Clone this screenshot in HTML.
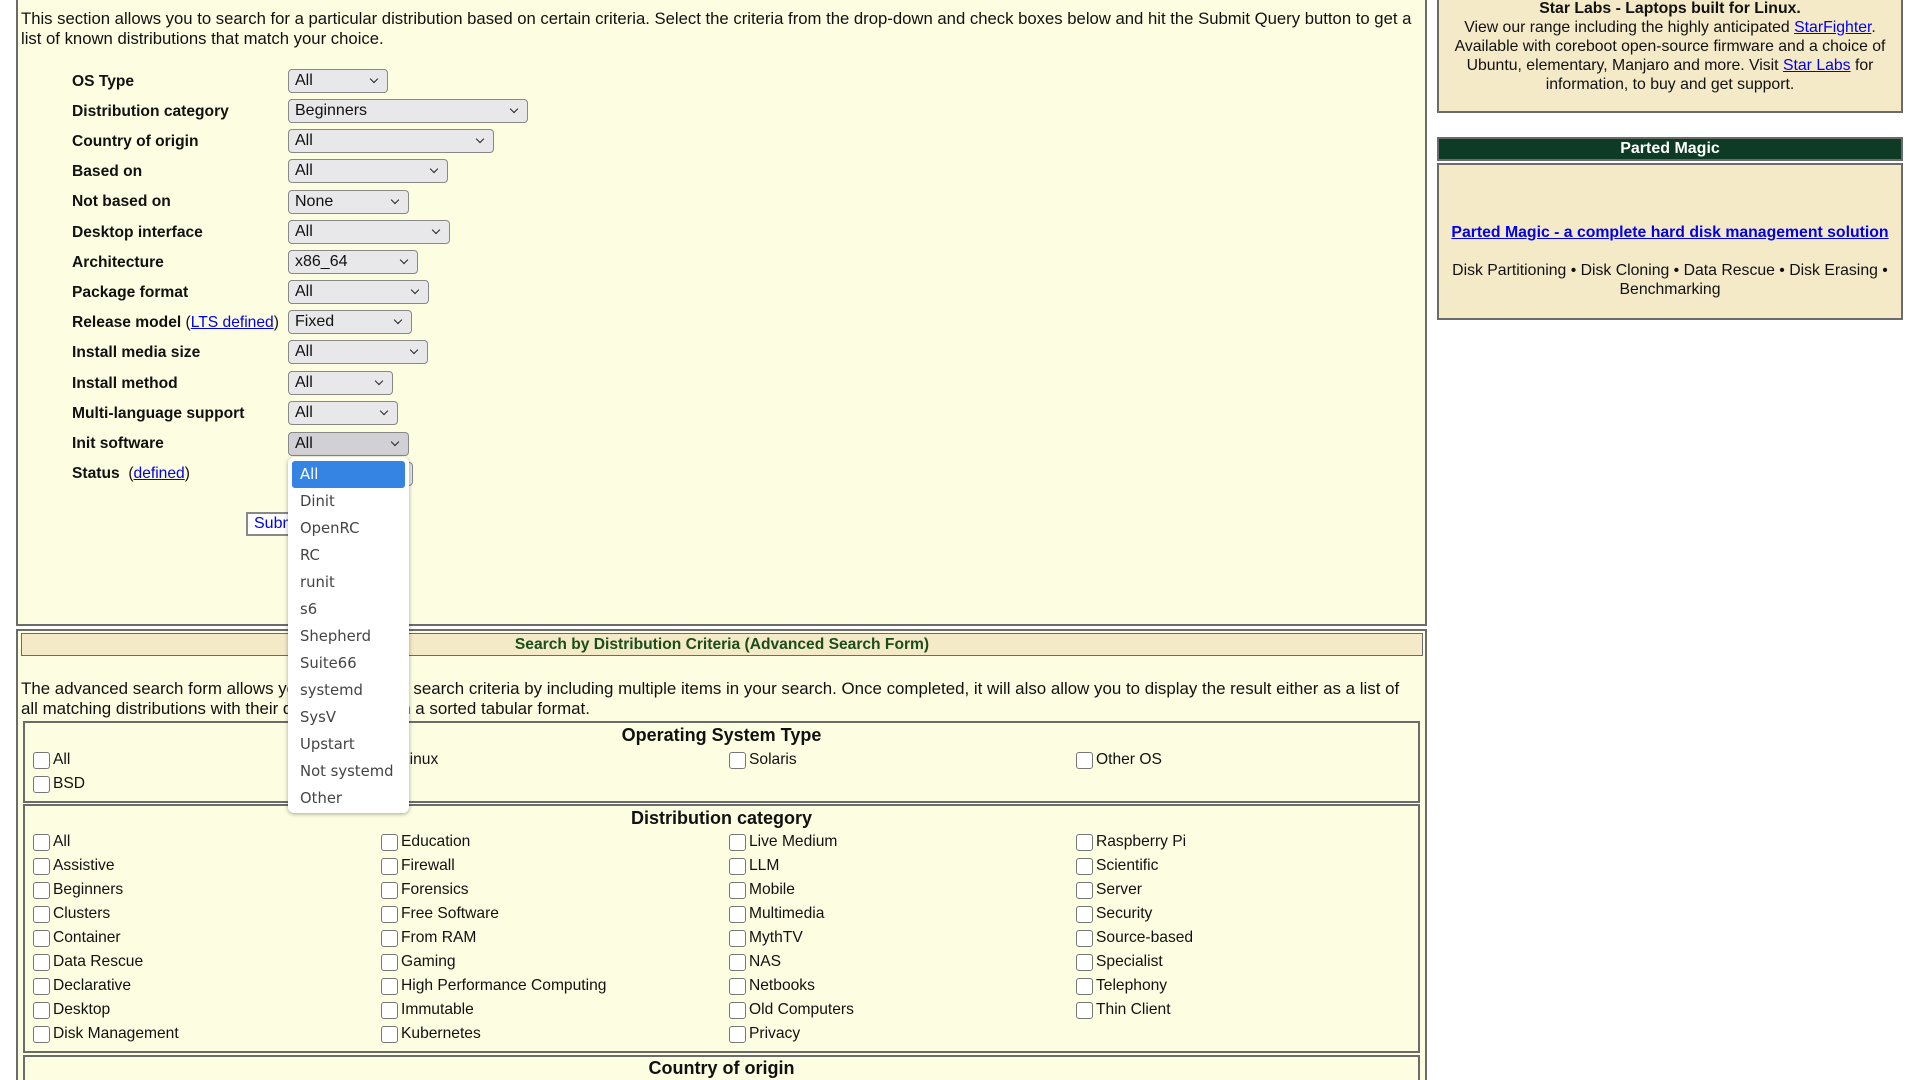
<!DOCTYPE html>
<html style="height:1080px;overflow:hidden"><head><meta charset="utf-8"><style>
*{box-sizing:border-box}
body{margin:0;width:1920px;height:1080px;overflow:hidden;background:#fff;font-family:"Liberation Sans",Arial,sans-serif;font-size:16px;color:#111;position:relative}
.a{position:absolute}
.panel{position:absolute;left:16px;width:1411px;background:#fdfde1;border:2px solid #6b6b6b}
a{color:#00e;text-decoration:underline}
.lab{position:absolute;left:72px;font-weight:bold;line-height:20px;font-size:15.6px;margin-top:1px}
.sel{position:absolute;left:288px;height:24px;background:#e8e8eb;border:1.5px solid #888;border-radius:4px;padding-left:6px;line-height:21px;font-size:16px}
.sel:after{content:"";position:absolute;right:10px;top:6px;width:5px;height:5px;border-right:1.6px solid #222;border-bottom:1.6px solid #222;transform:rotate(45deg)}
.box{position:absolute;left:23px;width:1397px;border:2px solid #6b6b6b;background:#fdfde1}
.h{position:absolute;left:0;right:0;text-align:center;font-weight:bold;font-size:18px}
.cb{position:absolute;font-size:15.6px;line-height:20px;padding-left:20px;padding-top:1px;white-space:nowrap}
.cb:before{content:"";position:absolute;left:0;top:3px;width:15px;height:15px;border:1px solid #777;border-radius:3px;background:#fff}
.dd{position:absolute;left:288px;top:457px;width:121px;height:356px;background:#fff;border-radius:6px;box-shadow:0 1px 4px rgba(0,0,0,.35);font-family:"DejaVu Sans",sans-serif;font-size:14.8px;color:#444}
.dd div{position:absolute;left:12px;line-height:20px}
.side{position:absolute;left:1437px;width:466px;background:#f5eac8;border:2px solid #6b6b6b;text-align:center;line-height:19px}
</style></head><body>
<div class="panel" style="top:-10px;height:636px"></div>
<div class="a" style="left:21px;top:9px;width:1405px;line-height:20px;font-size:16.7px">This section allows you to search for a particular distribution based on certain criteria. Select the criteria from the drop-down and check boxes below and hit the Submit Query button to get a list of known distributions that match your choice.</div>

<div class="lab" style="top:71px">OS Type</div><div class="sel" style="top:69px;width:100px">All</div>
<div class="lab" style="top:101px">Distribution category</div><div class="sel" style="top:99px;width:240px">Beginners</div>
<div class="lab" style="top:131px">Country of origin</div><div class="sel" style="top:129px;width:206px">All</div>
<div class="lab" style="top:161px">Based on</div><div class="sel" style="top:159px;width:160px">All</div>
<div class="lab" style="top:191px">Not based on</div><div class="sel" style="top:190px;width:121px">None</div>
<div class="lab" style="top:222px">Desktop interface</div><div class="sel" style="top:220px;width:162px">All</div>
<div class="lab" style="top:252px">Architecture</div><div class="sel" style="top:250px;width:130px">x86_64</div>
<div class="lab" style="top:282px">Package format</div><div class="sel" style="top:280px;width:141px">All</div>
<div class="lab" style="top:312px">Release model <span style="font-weight:normal">(<a>LTS defined</a>)</span></div><div class="sel" style="top:310px;width:124px">Fixed</div>
<div class="lab" style="top:342px">Install media size</div><div class="sel" style="top:340px;width:140px">All</div>
<div class="lab" style="top:373px">Install method</div><div class="sel" style="top:371px;width:105px">All</div>
<div class="lab" style="top:403px">Multi-language support</div><div class="sel" style="top:401px;width:110px">All</div>
<div class="lab" style="top:433px">Init software</div><div class="sel" style="top:432px;width:121px;background:#d0d0d5">All</div>
<div class="lab" style="top:463px">Status &nbsp;<span style="font-weight:normal">(<a>defined</a>)</span></div><div class="sel" style="top:462px;width:125px"></div>
<div class="a" style="left:246px;top:512px;width:80px;height:24px;border:2px solid #888;background:#fff;color:#00e;padding-left:6px;line-height:20px">Submit</div>

<div class="panel" style="top:629px;height:470px"></div>
<div class="a" style="left:21px;top:633px;width:1402px;height:23px;background:#f5eac8;border:1.5px solid #6b6b6b;text-align:center;font-weight:bold;color:#1a4d1a;font-size:15.6px;line-height:21px">Search by Distribution Criteria (Advanced Search Form)</div>
<div class="a" style="left:21px;top:679px;width:1398px;line-height:20px;font-size:16.9px">The advanced search form allows you to refine your search criteria by including multiple items in your search. Once completed, it will also allow you to display the result either as a list of all matching distributions with their descriptions or in a sorted tabular format.</div>

<div class="box" style="top:721px;height:82px"><div class="h" style="top:2px">Operating System Type</div></div>
<div class="cb" style="left:33px;top:749px">All</div><div class="cb" style="left:381px;top:749px">Linux</div><div class="cb" style="left:729px;top:749px">Solaris</div><div class="cb" style="left:1076px;top:749px">Other OS</div>
<div class="cb" style="left:33px;top:773px">BSD</div>

<div class="box" style="top:804px;height:249px"><div class="h" style="top:2px">Distribution category</div></div>
<div class="cb" style="left:33px;top:831px">All</div><div class="cb" style="left:33px;top:855px">Assistive</div><div class="cb" style="left:33px;top:879px">Beginners</div><div class="cb" style="left:33px;top:903px">Clusters</div><div class="cb" style="left:33px;top:927px">Container</div><div class="cb" style="left:33px;top:951px">Data Rescue</div><div class="cb" style="left:33px;top:975px">Declarative</div><div class="cb" style="left:33px;top:999px">Desktop</div><div class="cb" style="left:33px;top:1023px">Disk Management</div>
<div class="cb" style="left:381px;top:831px">Education</div><div class="cb" style="left:381px;top:855px">Firewall</div><div class="cb" style="left:381px;top:879px">Forensics</div><div class="cb" style="left:381px;top:903px">Free Software</div><div class="cb" style="left:381px;top:927px">From RAM</div><div class="cb" style="left:381px;top:951px">Gaming</div><div class="cb" style="left:381px;top:975px">High Performance Computing</div><div class="cb" style="left:381px;top:999px">Immutable</div><div class="cb" style="left:381px;top:1023px">Kubernetes</div>
<div class="cb" style="left:729px;top:831px">Live Medium</div><div class="cb" style="left:729px;top:855px">LLM</div><div class="cb" style="left:729px;top:879px">Mobile</div><div class="cb" style="left:729px;top:903px">Multimedia</div><div class="cb" style="left:729px;top:927px">MythTV</div><div class="cb" style="left:729px;top:951px">NAS</div><div class="cb" style="left:729px;top:975px">Netbooks</div><div class="cb" style="left:729px;top:999px">Old Computers</div><div class="cb" style="left:729px;top:1023px">Privacy</div>
<div class="cb" style="left:1076px;top:831px">Raspberry Pi</div><div class="cb" style="left:1076px;top:855px">Scientific</div><div class="cb" style="left:1076px;top:879px">Server</div><div class="cb" style="left:1076px;top:903px">Security</div><div class="cb" style="left:1076px;top:927px">Source-based</div><div class="cb" style="left:1076px;top:951px">Specialist</div><div class="cb" style="left:1076px;top:975px">Telephony</div><div class="cb" style="left:1076px;top:999px">Thin Client</div>

<div class="box" style="top:1055px;height:60px"><div class="h" style="top:1px">Country of origin</div></div>

<div class="dd">
<div style="left:4px;top:4px;width:113px;height:27px;background:#3584e4;border-radius:3px;color:#fff;padding-left:8px;line-height:27px">All</div>
<div style="top:35px">Dinit</div><div style="top:62px">OpenRC</div><div style="top:89px">RC</div><div style="top:116px">runit</div><div style="top:143px">s6</div><div style="top:170px">Shepherd</div><div style="top:197px">Suite66</div><div style="top:224px">systemd</div><div style="top:251px">SysV</div><div style="top:278px">Upstart</div><div style="top:305px">Not systemd</div><div style="top:332px">Other</div>
</div>

<div class="side" style="top:-14px;height:127px;padding-top:11px;font-size:15.8px"><b>Star Labs - Laptops built for Linux.</b><br>View our range including the highly anticipated <a>StarFighter</a>.<br>Available with coreboot open-source firmware and a choice of Ubuntu, elementary, Manjaro and more. Visit <a>Star Labs</a> for information, to buy and get support.</div>
<div class="a" style="left:1437px;top:137px;width:466px;height:24px;background:#0d3b26;border:2px solid #6b6b6b;color:#fff;font-weight:bold;text-align:center;line-height:20px">Parted Magic</div>
<div class="side" style="top:163px;height:157px;padding:58px 0 0;font-size:15.8px"><a style="font-weight:bold;white-space:nowrap">Parted Magic - a complete hard disk management solution</a><br><br>Disk Partitioning • Disk Cloning • Data Rescue • Disk Erasing • Benchmarking</div>
</body></html>
